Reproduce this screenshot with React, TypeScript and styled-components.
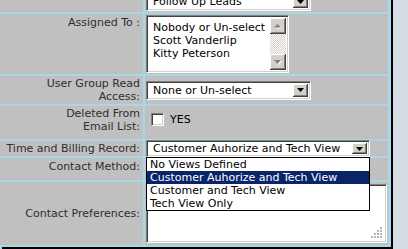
import React from "react";
import styled, { createGlobalStyle } from "styled-components";

const Global = createGlobalStyle`
  html, body { margin: 0; padding: 0; background: #d5dde5; overflow: hidden; }
  body { font-family: "DejaVu Sans", Verdana, sans-serif; font-size: 11px; }
`;

const Page = styled.div`
  display: flex;
  width: 408px;
  height: 249px;
  overflow: hidden;
  align-items: flex-start;
`;

const Panel = styled.div`
  width: 391px;
  border-right: 2px solid #000;
  background: #a8d8e8;
  display: flex;
  flex-direction: column;
  height: 260px;
`;

const FormTable = styled.div`
  margin-top: -8px;
  display: grid;
  grid-template-columns: 143px 243px;
  grid-template-rows: 20px 60px 28px 33px 15px 22px 63px;
  gap: 2px;
  padding: 0 3px 2px 0;
  background: #a8d8e8;
`;

const Label = styled.div<{ $top?: number }>`
  background: #c0c0c0;
  color: #2e2e2e;
  text-align: right;
  padding-right: 3px;
  padding-top: ${(p) => p.$top ?? 0}px;
  display: flex;
  align-items: ${(p) => (p.$top !== undefined ? "flex-start" : "center")};
  justify-content: flex-end;
  line-height: 13px;
  white-space: nowrap;
`;

const Value = styled.div<{ $top?: boolean }>`
  background: #c0c0c0;
  padding-left: 1px;
  display: flex;
  align-items: ${(p) => (p.$top ? "flex-start" : "center")};
  position: relative;
  min-height: 0;
`;

const Inset = styled.div`
  box-sizing: border-box;
  border: 1px solid;
  border-color: #808080 #fff #fff #808080;
  background: #fff;
  box-shadow: inset 1px 1px #404040, inset -1px -1px #d4d0c8;
  color: #000;
`;

const SelectBox = styled(Inset)<{ $w: number; $h: number; $mt?: number }>`
  width: ${(p) => p.$w}px;
  height: ${(p) => p.$h}px;
  flex: none;
  margin-top: ${(p) => p.$mt ?? 0}px;
  display: flex;
  align-items: center;
  padding: 2px;
`;

const SelectText = styled.span`
  flex: 1;
  padding-left: 4px;
  white-space: nowrap;
  overflow: hidden;
  line-height: 13px;
`;

const DropButton = styled.span`
  width: 15px;
  align-self: stretch;
  background: #d4d0c8;
  box-shadow: inset -1px -1px #404040, inset 1px 1px #fff, inset -2px -2px #808080;
  display: flex;
  align-items: center;
  justify-content: center;
`;

const Arrow = ({ color = "#000" }: { color?: string }) => (
  <svg width="7" height="4" viewBox="0 0 7 4">
    <path d="M0 0h7L3.5 4z" fill={color} />
  </svg>
);

const ListBox = styled(Inset)`
  width: 143px;
  height: 58px;
  margin-top: 1px;
  padding: 2px;
  display: flex;
`;

const ListItems = styled.div`
  flex: 1;
  padding: 3px 0 0 4px;
  line-height: 13px;
  white-space: nowrap;
`;

const ScrollBar = styled.div`
  width: 16px;
  display: flex;
  flex-direction: column;
  background: repeating-conic-gradient(#d4d0c8 0% 25%, #fff 0% 50%) 0 0 / 2px 2px;
`;

const ScrollBtn = styled.div`
  height: 16px;
  background: #d4d0c8;
  box-shadow: inset -1px -1px #404040, inset 1px 1px #fff, inset -2px -2px #808080;
  display: flex;
  align-items: center;
  justify-content: center;
`;

const Track = styled.div`
  flex: 1;
`;

const CheckRow = styled.label`
  display: flex;
  align-items: center;
  gap: 6px;
  padding-left: 5px;
  margin-bottom: 6px;
  color: #000;
`;

const CheckBox = styled(Inset)`
  width: 13px;
  height: 13px;
`;

const DropList = styled.div`
  position: absolute;
  left: 1px;
  top: calc(100% + 1px);
  width: 224px;
  box-sizing: border-box;
  border: 1px solid #000;
  background: #fff;
  z-index: 2;
`;

const Option = styled.div<{ $sel?: boolean }>`
  height: 13px;
  line-height: 13px;
  padding-left: 3px;
  white-space: nowrap;
  background: ${(p) => (p.$sel ? "#0a246a" : "#fff")};
  color: ${(p) => (p.$sel ? "#fff" : "#000")};
`;

const TextArea = styled(Inset)`
  width: 241px;
  height: 59px;
  margin-top: 2px;
  display: flex;
  align-items: flex-end;
  justify-content: flex-end;
  padding: 3px;
`;

const Grip = () => (
  <svg width="12" height="12" viewBox="0 0 12 12">
    {[
      [9, 0], [6, 3], [9, 3], [3, 6], [6, 6], [9, 6], [0, 9], [3, 9], [6, 9], [9, 9],
    ].map(([x, y]) => (
      <g key={`${x}-${y}`}>
        <rect x={x + 1} y={y + 1} width="2" height="2" fill="#fff" />
        <rect x={x} y={y} width="2" height="2" fill="#b8b8b8" />
      </g>
    ))}
  </svg>
);

const NextBox = styled.div`
  margin-left: 2px;
  border-top: 2px solid #000;
  flex: 1;
  background: #c0c0c0;
`;

export default function App() {
  return (
    <>
      <Global />
      <Page>
        <Panel>
          <FormTable>
            <Label />
            <Value>
              <SelectBox $w={165} $h={19} $mt={-1}>
                <SelectText>Follow Up Leads</SelectText>
                <DropButton>
                  <Arrow />
                </DropButton>
              </SelectBox>
            </Value>

            <Label $top={2}>Assigned To :</Label>
            <Value $top>
              <ListBox>
                <ListItems>
                  <div>Nobody or Un-select</div>
                  <div>Scott Vanderlip</div>
                  <div>Kitty Peterson</div>
                </ListItems>
                <ScrollBar>
                  <ScrollBtn>
                    <svg width="8" height="5" viewBox="0 0 8 5">
                      <path d="M1 4.5h7L4.5 1z" fill="#fff" />
                      <path d="M0 3.5h7L3.5 0z" fill="#808080" />
                    </svg>
                  </ScrollBtn>
                  <Track />
                  <ScrollBtn>
                    <svg width="8" height="5" viewBox="0 0 8 5">
                      <path d="M1 1h7L4.5 5z" fill="#fff" />
                      <path d="M0 0h7L3.5 4z" fill="#808080" />
                    </svg>
                  </ScrollBtn>
                </ScrollBar>
              </ListBox>
            </Value>

            <Label>
              User Group Read
              <br />
              Access:
            </Label>
            <Value>
              <SelectBox $w={165} $h={19}>
                <SelectText>None or Un-select</SelectText>
                <DropButton>
                  <Arrow />
                </DropButton>
              </SelectBox>
            </Value>

            <Label $top={1}>
              Deleted From
              <br />
              Email List:
            </Label>
            <Value>
              <CheckRow>
                <CheckBox />
                YES
              </CheckRow>
            </Value>

            <Label>Time and Billing Record:</Label>
            <Value>
              <SelectBox $w={224} $h={17}>
                <SelectText>Customer Auhorize and Tech View</SelectText>
                <DropButton>
                  <Arrow />
                </DropButton>
              </SelectBox>
              <DropList>
                <Option>No Views Defined</Option>
                <Option $sel>Customer Auhorize and Tech View</Option>
                <Option>Customer and Tech View</Option>
                <Option>Tech View Only</Option>
              </DropList>
            </Value>

            <Label $top={2}>Contact Method:</Label>
            <Value />

            <Label>Contact Preferences:</Label>
            <Value $top>
              <TextArea>
                <Grip />
              </TextArea>
            </Value>
          </FormTable>
          <NextBox />
        </Panel>
      </Page>
    </>
  );
}
